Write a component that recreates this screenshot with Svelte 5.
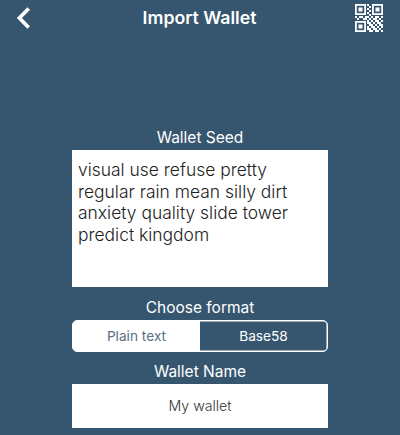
<script>
  const finders = [[0, 0], [17, 0], [0, 17]];
  // Data modules outside the finder squares, on a 14 x 14 grid
  const qr = [
    '00000010000000',
    '00000001000000',
    '00000010000000',
    '00000001000000',
    '00000010000000',
    '00000001000000',
    '10110110101101',
    '01001101011010',
    '00000010101101',
    '00000011010110',
    '00000001101011',
    '00000010110101',
    '00000011011010',
    '00000001101101',
  ];
  let format = $state('Plain text');
  let seed = $state('visual use refuse pretty regular rain mean silly dirt anxiety quality slide tower predict kingdom');
  let name = $state('My wallet');
</script>

<main>
  <header>
    <button class="icon" aria-label="Back">
      <svg width="16" height="24" viewBox="0 0 16 24"><path d="M12.7 2.5 3.4 12l9.3 9.5" fill="none" stroke="#fff" stroke-width="3.7" /></svg>
    </button>
    <h1>Import Wallet</h1>
    <button class="icon" aria-label="Scan QR code">
      <svg width="28" height="28" viewBox="0 0 28 28" fill="#fff">
        {#each finders as [x, y]}
          <rect x={x + 0.9} y={y + 0.9} width="9.2" height="9.2" fill="none" stroke="#fff" stroke-width="1.8" />
          <rect x={x + 3.5} y={y + 3.5} width="4" height="4" />
        {/each}
        {#each qr as row, y}
          {#each row as cell, x}
            {#if cell === '1'}<rect x={x * 2} y={y * 2} width="2" height="2" />{/if}
          {/each}
        {/each}
      </svg>
    </button>
  </header>

  <section>
    <label for="seed">Wallet Seed</label>
    <textarea id="seed" bind:value={seed} spellcheck="false"></textarea>
    <div class="label format">Choose format</div>
    <div class="segments">
      {#each ['Plain text', 'Base58'] as option}
        <button class:active={format === option} onclick={() => (format = option)}>{option}</button>
      {/each}
    </div>
    <label class="name" for="name">Wallet Name</label>
    <input id="name" bind:value={name} />
  </section>
</main>

<style>
  :global(body) { background: #36566f; }
  main {
    width: 400px;
    height: 435px;
    overflow: hidden;
    box-sizing: border-box;
    background: #36566f;
    color: #fff;
    font-family: Inter, "Liberation Sans", sans-serif;
  }
  header {
    display: flex;
    justify-content: space-between;
    align-items: center;
    height: 36px;
    padding: 0 17px 0 16px;
  }
  h1 { margin: 0 0 0 12px; font-size: 17.7px; font-weight: 600; line-height: 36px; }
  button, input, textarea { font-family: inherit; border: 0; margin: 0; padding: 0; background: none; }
  .icon { display: flex; }
  svg { display: block; }
  section { display: flex; flex-direction: column; width: 256px; margin: 90px auto 0; }
  label, .label { height: 24px; line-height: 24px; font-size: 15.5px; text-align: center; }
  textarea {
    display: block;
    box-sizing: border-box;
    height: 137px;
    padding: 9px 6px;
    background: #fff;
    color: #222;
    font-size: 17.45px;
    font-weight: 300;
    line-height: 21.6px;
    resize: none;
    outline: 0;
    overflow: hidden;
  }
  .format { margin-top: 9px; height: 24px; }
  .segments {
    display: flex;
    box-sizing: border-box;
    height: 32px;
    border: 1.5px solid #fff;
    border-radius: 5px;
    overflow: hidden;
    box-shadow: inset 0 0 0 0.5px #fff;
  }
  .segments button { flex: 1; color: #fff; font-size: 13.7px; }
  .segments .active { background: #fff; color: #5a6f83; }
  .name { margin-top: 8px; height: 24px; }
  input {
    box-sizing: border-box;
    height: 44px;
    padding-bottom: 1px;
    background: #fff;
    color: #333;
    font-size: 14.2px;
    font-weight: 300;
    text-align: center;
    outline: 0;
  }
</style>
